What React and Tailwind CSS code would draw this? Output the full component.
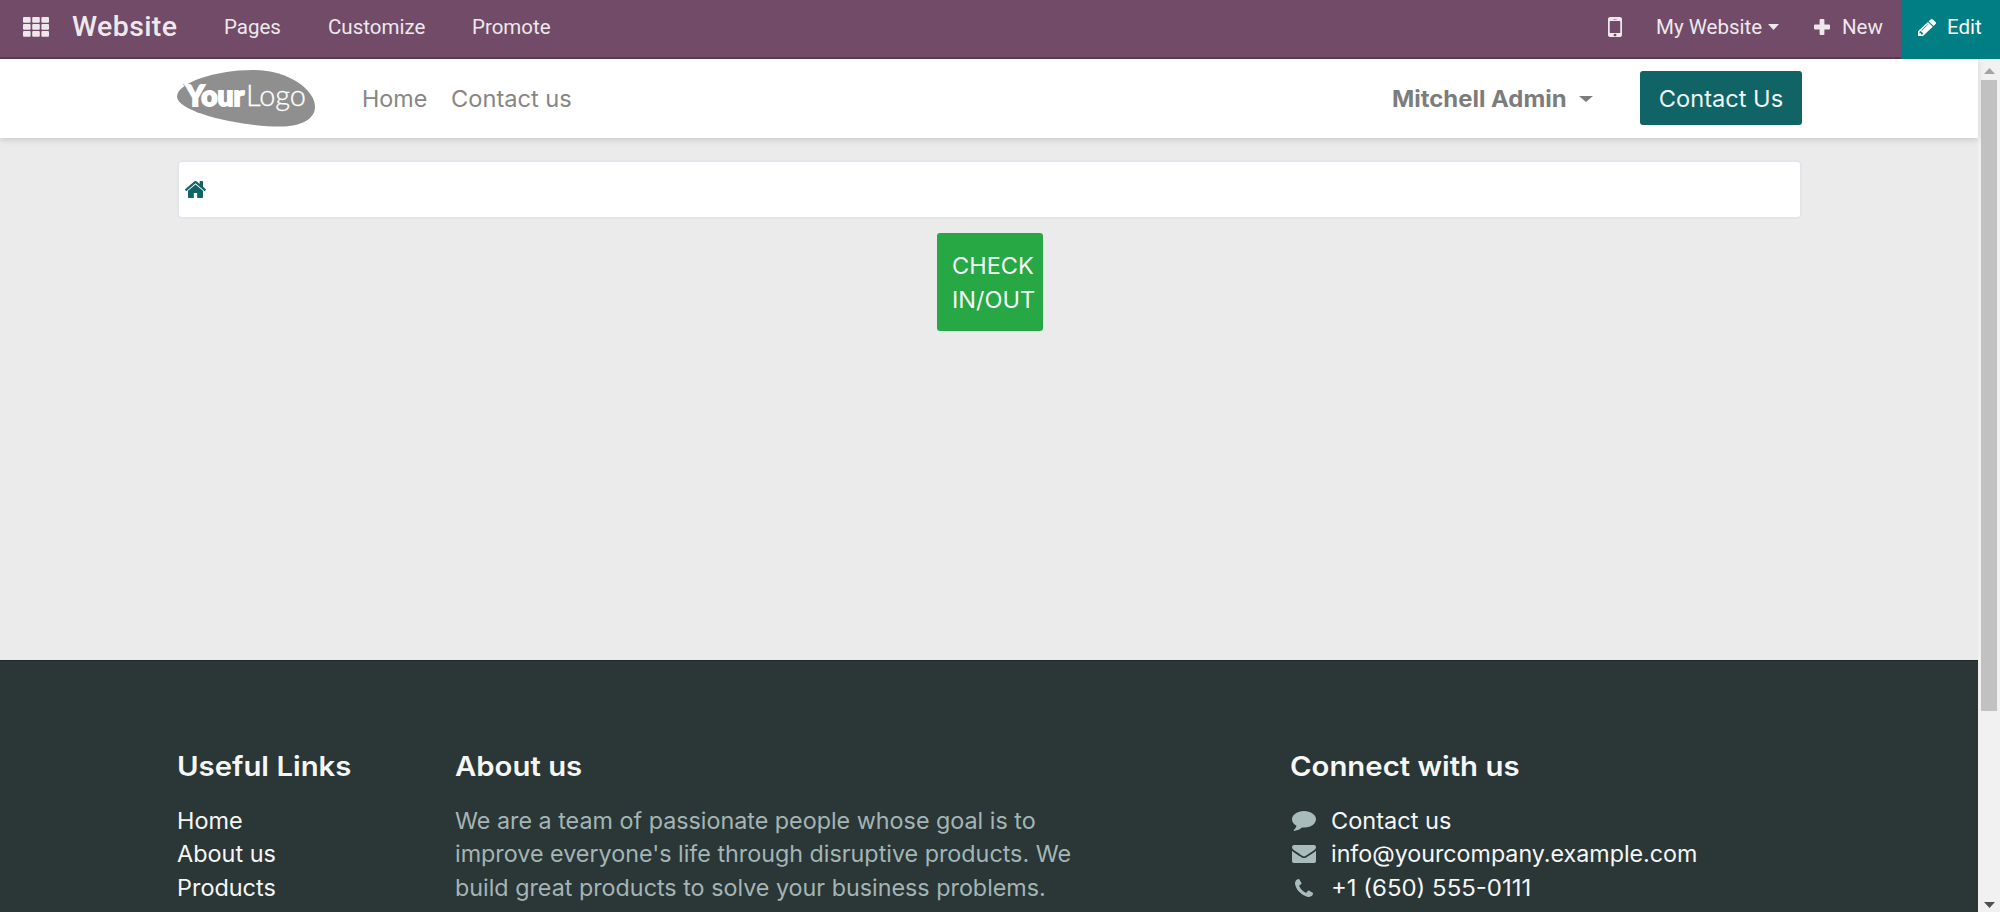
const ICONS = {
  comment: ["0 256 1792 1544", "M1792 896q0 174-120 321.5t-326 233-450 85.5q-70 0-145-8-198 175-460 242-49 14-114 22-17 2-30.5-9t-17.5-29v-1q-3-4-.5-12t2-10 4.5-9.5l6-9 7-8.5 8-9q7-8 31-34.5t34.5-38 31-39.5 32.5-51 27-59 26-76q-157-89-247.5-220t-90.5-281q0-130 71-248.5t191-204.5 286-136.5 348-50.5 348 50.5 286 136.5 191 204.5 71 248.5z"],
  envelope: ["0 256 1792 1408", "M1792 710v794q0 66-47 113t-113 47h-1472q-66 0-113-47t-47-113v-794q44 49 101 87 362 246 497 345 57 42 92.5 65.5t94.5 48 110 24.5h2q51 0 110-24.5t94.5-48 92.5-65.5q170-123 498-345 57-39 100-87zm0-294q0 79-49 151t-122 123q-376 261-468 325-10 7-42.5 31t-54 38.8-52 32.5-57.5 27-50 9h-2q-23 0-50-9t-57.5-27-52-32.5-54-38.8-42.5-31q-91-64-262-182.5t-205-142.5q-62-42-117-115.5t-55-136.5q0-78 41.5-130t118.5-52h1472q65 0 112.500 47t47.500 113z"],
  phone: ["192 128 1408 1408", "M1600 1240q0 27-10 70.5t-21 68.5q-21 50-122 106-94 51-186 51-27 0-53-3.5t-57.5-12.5-47-14.5-55.5-20.5-49-18q-98-35-175-83-127-79-264-216t-216-264q-48-77-83-175-3-9-18-49t-20.5-55.5-14.5-47-12.5-57.5-3.5-53q0-92 51-186 56-101 106-122 25-11 68.5-21t70.5-10q14 0 21 3 18 6 53 76 11 19 30 54t35 63.5 31 53.5q3 4 17.5 25t21.5 35.5 7 28.5q0 20-28.5 50t-62 55-62 53-28.5 46q0 9 5 22.5t8.5 20.5 14 24 11.5 19q76 137 174 235t235 174q2 1 19 11.5t24 14 20.5 8.5 22.5 5q18 0 46-28.5t53-62 55-62 50-28.5q14 0 28.5 7t35.5 21.5 25 17.5q25 15 53.5 31t63.5 35 54 30q70 35 76 53 3 7 3 21z"],
  home: ["89 253 1614 1283", "M1472 992v480q0 26-19 45t-45 19h-384v-384h-256v384h-384q-26 0-45-19t-19-45v-480q0-1 .5-3t.5-3l575-474 575 474q1 2 1 6zm223-69l-62 74q-8 9-21 11h-3q-13 0-21-7l-692-577-692 577q-12 8-24 7-13-2-21-11l-62-74q-8-10-7-23.5t11-21.5l719-599q32-26 76-26t76 26l244 204v-195q0-14 9-23t23-9h192q14 0 23 9t9 23v408l219 182q10 8 11 21.5t-7 23.5z"],
  pencil: ["128 149 1515 1515", "M491 1536l91-91-235-235-91 91v107h128v128h107zm523-928q0-22-22-22-10 0-17 7l-542 542q-7 7-7 17 0 22 22 22 10 0 17-7l542-542q7-7 7-17zm-54-192l416 416-832 832h-416v-416zm683 96q0 53-37 90l-166 166-416-416 166-165q36-38 90-38 53 0 91 38l235 234q37 39 37 91z"],
  mobile: ["512 256 768 1280", "M976 1408q0-33-23.5-56.5t-56.5-23.5-56.5 23.5-23.5 56.5 23.5 56.5 56.5 23.5 56.5-23.5 23.5-56.5zm208-160v-704q0-13-9.5-22.5t-22.5-9.5h-512q-13 0-22.5 9.5t-9.5 22.5v704q0 13 9.5 22.5t22.5 9.5h512q13 0 22.5-9.5t9.5-22.5zm-192-848q0-16-16-16h-160q-16 0-16 16t16 16h160q16 0 16-16zm288-16v1024q0 52-38 90t-90 38h-512q-52 0-90-38t-38-90v-1024q0-52 38-90t90-38h512q52 0 90 38t38 90z"],
  plus: ["0 0 16 16", "M6.6 0h2.8q1 0 1 1v4.600h4.600q1 0 1 1v2.800q0 1-1 1h-4.600v4.600q0 1-1 1h-2.800q-1 0-1-1v-4.600h-4.600q-1 0-1-1v-2.800q0-1 1-1h4.600v-4.600q0-1 1-1z"],
  down: ["0 0 10 5", "M0 0h10l-5 5z"],
  up: ["0 0 10 5", "M0 5h10l-5-5z"],
};

function Icon({ name, className }) {
  const [box, path] = ICONS[name];
  return (
    <svg viewBox={box} preserveAspectRatio="none" className={"shrink-0 " + className} fill="currentColor" aria-hidden="true">
      <path d={path} />
    </svg>
  );
}

function AppsIcon() {
  return (
    <svg viewBox="0 0 26 20" className="h-5 w-[26px] shrink-0" fill="currentColor" aria-hidden="true">
      {[0, 7, 14].map((y) => [0, 9.2, 18.4].map((x) => <rect key={x + "-" + y} x={x} y={y} width="7.6" height="5.7" rx="1" />))}
    </svg>
  );
}

function Logo() {
  return (
    <svg viewBox="0 0 138 57" className="h-[57px] w-[138px] shrink-0" aria-label="YourLogo">
      <path d="M0 26.500C0 13 38 0 76 0C112 0 138 20 138 37C138 49 124 56.500 103 56.500C62 56.500 0 42 0 26.500Z" fill="#8f8f8f" />
      <path d="M5 14.500h8v3z" fill="#8f8f8f" />
      <text x="9" y="36" textLength="58" lengthAdjust="spacingAndGlyphs" fill="#fff" stroke="#fff" strokeWidth="1.8" className="font-['Lato',sans-serif] text-[28px] font-black">Your</text>
      <text x="69" y="36" textLength="60" lengthAdjust="spacingAndGlyphs" fill="#fff" stroke="#fff" strokeWidth="0.3" className="font-['Lato',sans-serif] text-[29px] font-light">Logo</text>
    </svg>
  );
}

function TopBar() {
  return (
    <header className="flex h-[59px] shrink-0 bg-[#714b67] font-['Roboto',sans-serif] text-[20.5px] text-[#eee8ec]">
      <div className="flex flex-1 items-center border-b-2 border-[#5b3a52] pb-[3px] pl-[23px]">
        <AppsIcon />
        <span className="ml-[23px] w-[106px] text-[28.5px] font-medium tracking-[0.4px] whitespace-nowrap">Website</span>
        <span className="ml-[46px] w-[104px]">Pages</span>
        <span className="w-[144px]">Customize</span>
        <span>Promote</span>
        <div className="flex-1" />
        <Icon name="mobile" className="mr-[34px] h-5 w-[14px]" />
        <span className="w-[107px] whitespace-nowrap">My Website</span>
        <Icon name="down" className="ml-[5px] h-[6px] w-[11px]" />
        <Icon name="plus" className="ml-[35px] h-4 w-4" />
        <span className="ml-3 w-[59px]">New</span>
      </div>
      <div className="flex w-[99px] items-center bg-[#017e84] pb-[5px] pl-[17px] text-white">
        <Icon name="pencil" className="h-[17px] w-[18px]" />
        <span className="ml-[11px]">Edit</span>
      </div>
    </header>
  );
}

function SiteNav() {
  return (
    <nav className="z-10 flex h-[79px] shrink-0 items-center bg-white pr-[176px] pl-[177px] text-[#868686] shadow-[0_2px_6px_rgba(0,0,0,0.14)]">
      <Logo />
      <span className="ml-[47px] origin-left scale-x-[1.04]">Home</span>
      <span className="ml-[26px] origin-left scale-x-[1.055]">Contact us</span>
      <div className="flex-1" />
      <span className="origin-right scale-x-[1.067] font-bold text-[#7c7c7c]">Mitchell Admin</span>
      <Icon name="down" className="mr-[47px] ml-3 h-[6px] w-[14px] text-[#7c7c7c]" />
      <span className="mb-px flex h-[54px] w-[162px] items-center justify-center rounded-[3px] bg-[#106465] pt-px text-[#f0f5f5]">
        <span className="scale-x-[1.055]">Contact Us</span>
      </span>
    </nav>
  );
}

function Heading({ children }) {
  return <h5 className="mb-[20px] w-fit origin-left scale-x-[1.07] pt-px text-[27.4px] font-semibold text-[#f5f6f6]">{children}</h5>;
}

function Footer() {
  return (
    <footer className="flex h-[252px] shrink-0 overflow-hidden border-t border-[#1c2726] bg-[#2b3636] pt-[88px] pl-[176.500px] leading-[33.7px] text-[#f5f6f6]">
      <div className="w-[278px]">
        <Heading>Useful Links</Heading>
        <div className="w-fit origin-left scale-x-[1.046]">
          <p>Home</p>
          <p>About us</p>
          <p>Products</p>
        </div>
      </div>
      <div className="w-[835px] text-[#a3b5b4]">
        <Heading>About us</Heading>
        <div className="w-fit origin-left scale-x-[1.041]">
          <p>We are a team of passionate people whose goal is to</p>
          <p>improve everyone's life through disruptive products. We</p>
          <p>build great products to solve your business problems.</p>
        </div>
      </div>
      <div>
        <Heading>Connect with us</Heading>
        <p className="flex items-center">
          <Icon name="comment" className="mr-[15px] ml-0.5 h-5 w-6 text-[#a9bcbb]" />
          <span className="origin-left scale-x-[1.052]">Contact us</span>
        </p>
        <p className="flex items-center">
          <Icon name="envelope" className="mr-[15px] ml-0.5 h-[18px] w-6 text-[#a9bcbb]" />
          <span className="origin-left scale-x-[1.038]">info@yourcompany.example.com</span>
        </p>
        <p className="flex items-center">
          <Icon name="phone" className="mr-[18px] ml-[5px] h-[18px] w-[18px] text-[#a9bcbb]" />
          <span className="origin-left scale-x-[1.07]">+1 (650) 555-0111</span>
        </p>
      </div>
    </footer>
  );
}

function Scrollbar() {
  return (
    <div className="flex w-[22px] shrink-0 flex-col items-center bg-[#f1f1f1]">
      <Icon name="up" className="mt-[9px] h-[6px] w-[11px] text-[#a3a3a3]" />
      <div className="mt-[6px] mr-px h-[631px] w-4 bg-[#c1c1c1]" />
      <div className="flex-1" />
      <Icon name="down" className="mb-[4px] h-[6px] w-[11px] text-[#505050]" />
    </div>
  );
}

export default function App() {
  return (
    <div className="flex h-[912px] w-[2000px] flex-col overflow-hidden bg-[#ebebeb] font-['Inter',sans-serif] text-[22.4px]">
      <TopBar />
      <div className="flex min-h-0 flex-1">
        <div className="flex w-[1978px] flex-col">
          <SiteNav />
          <main className="flex flex-1 flex-col items-center pt-[22px] pl-px">
            <div className="flex h-[59px] w-[1625px] items-center rounded-[5px] border-2 border-[#e2e6ea] bg-white pl-[6px]">
              <Icon name="home" className="h-[17px] w-[21px] text-[#106465]" />
            </div>
            <div className="mt-[14px] ml-px h-[98px] w-[106px] rounded-[3px] bg-[#28a745] pt-4 pl-[15px] leading-[33.7px] text-[#f4fbf6]">
              <p className="w-20 origin-left scale-x-[1.05]">CHECK IN/OUT</p>
            </div>
          </main>
          <Footer />
        </div>
        <Scrollbar />
      </div>
    </div>
  );
}
